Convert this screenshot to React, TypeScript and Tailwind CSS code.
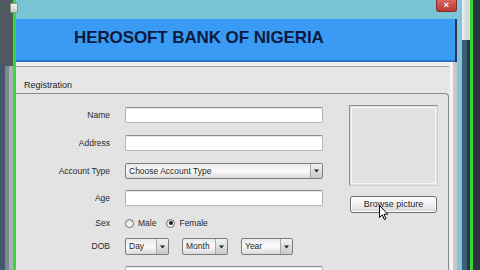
import React from "react";

function TextField({ w = "w-[198px]" }: { w?: string }) {
  return (
    <div
      className={`${w} h-[16px] shrink-0 bg-white border border-[#b4b4b4] border-t-[#8c8c8c] rounded-[2px] shadow-[inset_0_1px_0_#e6e6e6]`}
    />
  );
}

function Arrow({ w = "w-[12px]" }: { w?: string }) {
  return (
    <div
      className={`${w} h-full flex items-center justify-center border-l border-[#a8a8a8] bg-gradient-to-b from-[#f2f2f2] to-[#c9c9c9]`}
    >
      <svg width="5" height="4" viewBox="0 0 5 4">
        <path d="M0 0.5 L5 0.5 L2.5 3.5 Z" fill="#222" />
      </svg>
    </div>
  );
}

function Select({ w, text, h = "h-[16px]" }: { w: string; text: string; h?: string }) {
  return (
    <div
      className={`${w} ${h} shrink-0 flex items-stretch border border-[#7c7c7c] rounded-[2px] bg-gradient-to-b from-[#e9e9e9] via-[#fbfbfb] to-[#d9d9d9] overflow-hidden`}
    >
      <div className="flex-1 flex items-center pl-[3px] text-[8.5px] text-[#1c1c1c] leading-none">
        {text}
      </div>
      <Arrow />
    </div>
  );
}

function Radio({ checked }: { checked?: boolean }) {
  return (
    <div className="w-[9px] h-[9px] rounded-full border border-[#6f6f6f] bg-gradient-to-b from-[#dcdcdc] to-white flex items-center justify-center">
      {checked && <div className="w-[4px] h-[4px] rounded-full bg-[#1e1e1e]" />}
    </div>
  );
}

function Row({ label, h, children }: { label: string; h: string; children: React.ReactNode }) {
  return (
    <div className={`flex items-center shrink-0 ${h}`}>
      <div className="w-[94px] text-right text-[8.5px] text-[#2a2a2a] leading-none">{label}</div>
      <div className="ml-[15px] flex items-center">{children}</div>
    </div>
  );
}

export default function App() {
  return (
    <div className="relative flex h-[270px] w-[480px] overflow-hidden bg-[#2c3742] font-['Liberation_Sans',Arial,sans-serif]">
      {/* left strips */}
      <div className="flex flex-col w-[13px]">
        <div className="h-[66px] shrink-0 bg-[#4e5960]" />
        <div className="flex-1 flex">
          <div className="w-[5px] bg-[#45576a]" />
          <div className="w-[4px] bg-[#7b8a91]" />
          <div className="w-[4px] bg-[#a8b1b3]" />
        </div>
      </div>
      <div className="w-[3px] bg-[#36dc36]" />

      {/* window */}
      <div className="w-[441px] h-[270px] flex flex-col overflow-hidden">
        {/* title bar */}
        <div className="h-[19px] shrink-0 bg-[#79c5d6] flex justify-end items-start">
          <div className="w-[21px] h-[12px] bg-gradient-to-b from-[#d9675f] to-[#b93a33] rounded-b-[3px] border border-t-0 border-[#8a2a26] flex items-center justify-center text-white text-[9px] leading-none font-bold">
            ×
          </div>
        </div>
        {/* header */}
        <div className="h-[43px] shrink-0 bg-[#3a9bf4] border-b-2 border-[#2a72c4] flex items-start pl-[58px] pt-[10px] mr-[2px]">
          <span className="text-[17px] font-bold text-[#0c1b3d] leading-none tracking-[-0.1px]">
            HEROSOFT BANK OF NIGERIA
          </span>
        </div>
        {/* body */}
        <div className="flex-1 min-h-0 flex bg-[#e5e5e5] overflow-hidden">
          <div className="w-[433px] flex flex-col">
            <div className="h-[4px] shrink-0 bg-[#efefef]" />
            <div className="h-[27px] shrink-0 border-t border-[#9a9a9a] bg-[#e6e6e6] flex items-end pl-[8px] pb-[3px]">
              <span className="text-[9px] text-[#1e1e1e] leading-none">Registration</span>
            </div>
            <div className="flex-1 shrink-0 border-t border-r border-[#8a8a8a] rounded-tr-[4px] bg-[#e3e3e3] flex items-start pt-[11px]">
              <div className="flex flex-col mt-[2px]">
                <Row label="Name" h="h-[16px]">
                  <TextField />
                </Row>
                <div className="h-[12px] shrink-0" />
                <Row label="Address" h="h-[16px]">
                  <TextField />
                </Row>
                <div className="h-[12px] shrink-0" />
                <Row label="Account Type" h="h-[16px]">
                  <Select w="w-[198px]" text="Choose Account Type" />
                </Row>
                <div className="h-[11px] shrink-0" />
                <Row label="Age" h="h-[16px]">
                  <TextField />
                </Row>
                <div className="h-[10px] shrink-0" />
                <Row label="Sex" h="h-[14px]">
                  <div className="flex items-center text-[8.5px] text-[#2a2a2a] leading-none">
                    <Radio />
                    <span className="ml-[4px]">Male</span>
                    <div className="ml-[10px]">
                      <Radio checked />
                    </div>
                    <span className="ml-[4px]">Female</span>
                  </div>
                </Row>
                <div className="h-[8px] shrink-0" />
                <Row label="DOB" h="h-[17px]">
                  <div className="flex items-center gap-[13px]">
                    <Select w="w-[44px]" h="h-[17px]" text="Day" />
                    <Select w="w-[46px]" h="h-[17px]" text="Month" />
                    <Select w="w-[52px]" h="h-[17px]" text="Year" />
                  </div>
                </Row>
                <div className="h-[11px] shrink-0" />
                <Row label="Occupation" h="h-[16px]">
                  <TextField />
                </Row>
              </div>
              <div className="ml-[26px] flex flex-col w-[89px]">
                <div className="h-[81px] w-[89px] border border-[#8c8c8c] border-r-[#cfcfcf] border-b-[#cfcfcf] bg-[#e2e2e2] p-[1px]">
                  <div className="h-full w-full border border-[#f6f6f6]" />
                </div>
                <div className="mt-[10px] ml-[1px] w-[87px] h-[17px] rounded-[3px] border border-[#6e6e6e] bg-gradient-to-b from-[#fdfdfd] via-[#f0f0f0] to-[#d6d6d6] flex items-center justify-center text-[9px] text-[#1e1e1e] leading-none shadow-[inset_0_0_0_1px_#ffffff]">
                  Browse picture
                </div>
              </div>
            </div>
          </div>
          <div className="w-[8px] flex bg-[#e9e9e9]">
            <div className="w-[1px]" />
            <div className="w-[3px] bg-[#f4f4f4]" />
            <div className="w-[4px] bg-[#c9c9c9]" />
          </div>
        </div>
      </div>

      {/* right strips */}
      <div className="w-[5px] bg-[#82c4df]" />
      <div className="w-[5px] flex flex-col">
        <div className="h-[40px] shrink-0 bg-gradient-to-r from-[#f0f0f0] to-[#cfd6d8]" />
        <div className="flex-1 bg-[#3b5e72]" />
      </div>
      <div className="w-[3px] flex flex-col">
        <div className="h-[40px] shrink-0 bg-[#d8dcdc]" />
        <div className="flex-1 bg-[#27364a]" />
      </div>
      <div className="w-[3px] bg-[#36d436]" />
      <div className="w-[7px] bg-[#2b3542]" />

      {/* window icon */}
      <div className="absolute left-[10px] top-[3px] w-[8px] h-[10px] rounded-[1px] bg-gradient-to-b from-[#f4f4e8] to-[#c9cfc0] border border-[#8a9080]" />

      {/* mouse cursor */}
      <svg className="absolute left-[379px] top-[205px]" width="10" height="16" viewBox="0 0 10 16">
        <path d="M0.5 0.5 L0.5 12.5 L3.3 9.8 L5.3 14.5 L7 13.8 L5 9.2 L8.8 9.2 Z" fill="#fff" stroke="#000" strokeWidth="1" strokeLinejoin="round" />
      </svg>
    </div>
  );
}
